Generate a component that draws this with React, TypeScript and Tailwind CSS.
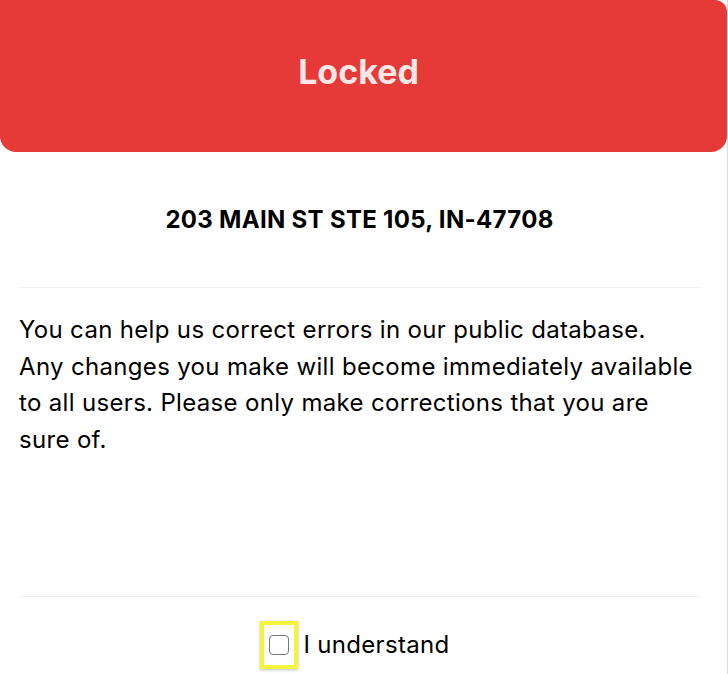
export default function App() {
  return (
    <div className="w-[728px] h-[674px] bg-white overflow-hidden border-r border-[#dcdcdc] flex flex-col font-['Inter',sans-serif] text-black">
      {/* Header */}
      <div className="h-[152px] shrink-0 bg-[#e53a38] rounded-tr-xl rounded-b-2xl flex items-center justify-center pb-[10px] pr-[10px]">
        <h1 className="text-[34px] font-bold text-[#fde6e6]">Locked</h1>
      </div>

      {/* Address */}
      <div className="h-[135px] shrink-0 flex items-center justify-center pr-[8px]">
        <h2 className="text-[24px] font-bold tracking-[0.3px]">203 MAIN ST STE 105, IN-47708</h2>
      </div>

      <div className="ml-[19px] w-[682px] h-px bg-[#eeeeee]" />

      {/* Body */}
      <div className="h-[308px] shrink-0 pl-[19px] pr-[28px] pt-[24px]">
        <p className="text-[24px] leading-[36.5px] tracking-[0.33px]">
          You can help us correct errors in our public database.
          <br />
          Any changes you make will become immediately available to all users. Please only make corrections that
          you are sure of.
        </p>
      </div>

      <div className="ml-[19px] w-[682px] h-px bg-[#eeeeee]" />

      {/* Confirm */}
      <div className="flex-1 flex items-center justify-center pt-[18px] pr-[17px]">
        <label className="flex items-center gap-[5px] cursor-pointer">
          <span className="w-[38px] h-[48px] border-[4px] border-[#f4f43c] shadow-[0_1px_3px_rgba(0,0,0,0.25)] flex items-center justify-center">
            <input type="checkbox" className="w-[20px] h-[20px] appearance-none rounded-[4px] border-[1.5px] border-[#767676] bg-white" />
          </span>
          <span className="text-[24px] tracking-[0.33px]">I understand</span>
        </label>
      </div>
    </div>
  )
}
